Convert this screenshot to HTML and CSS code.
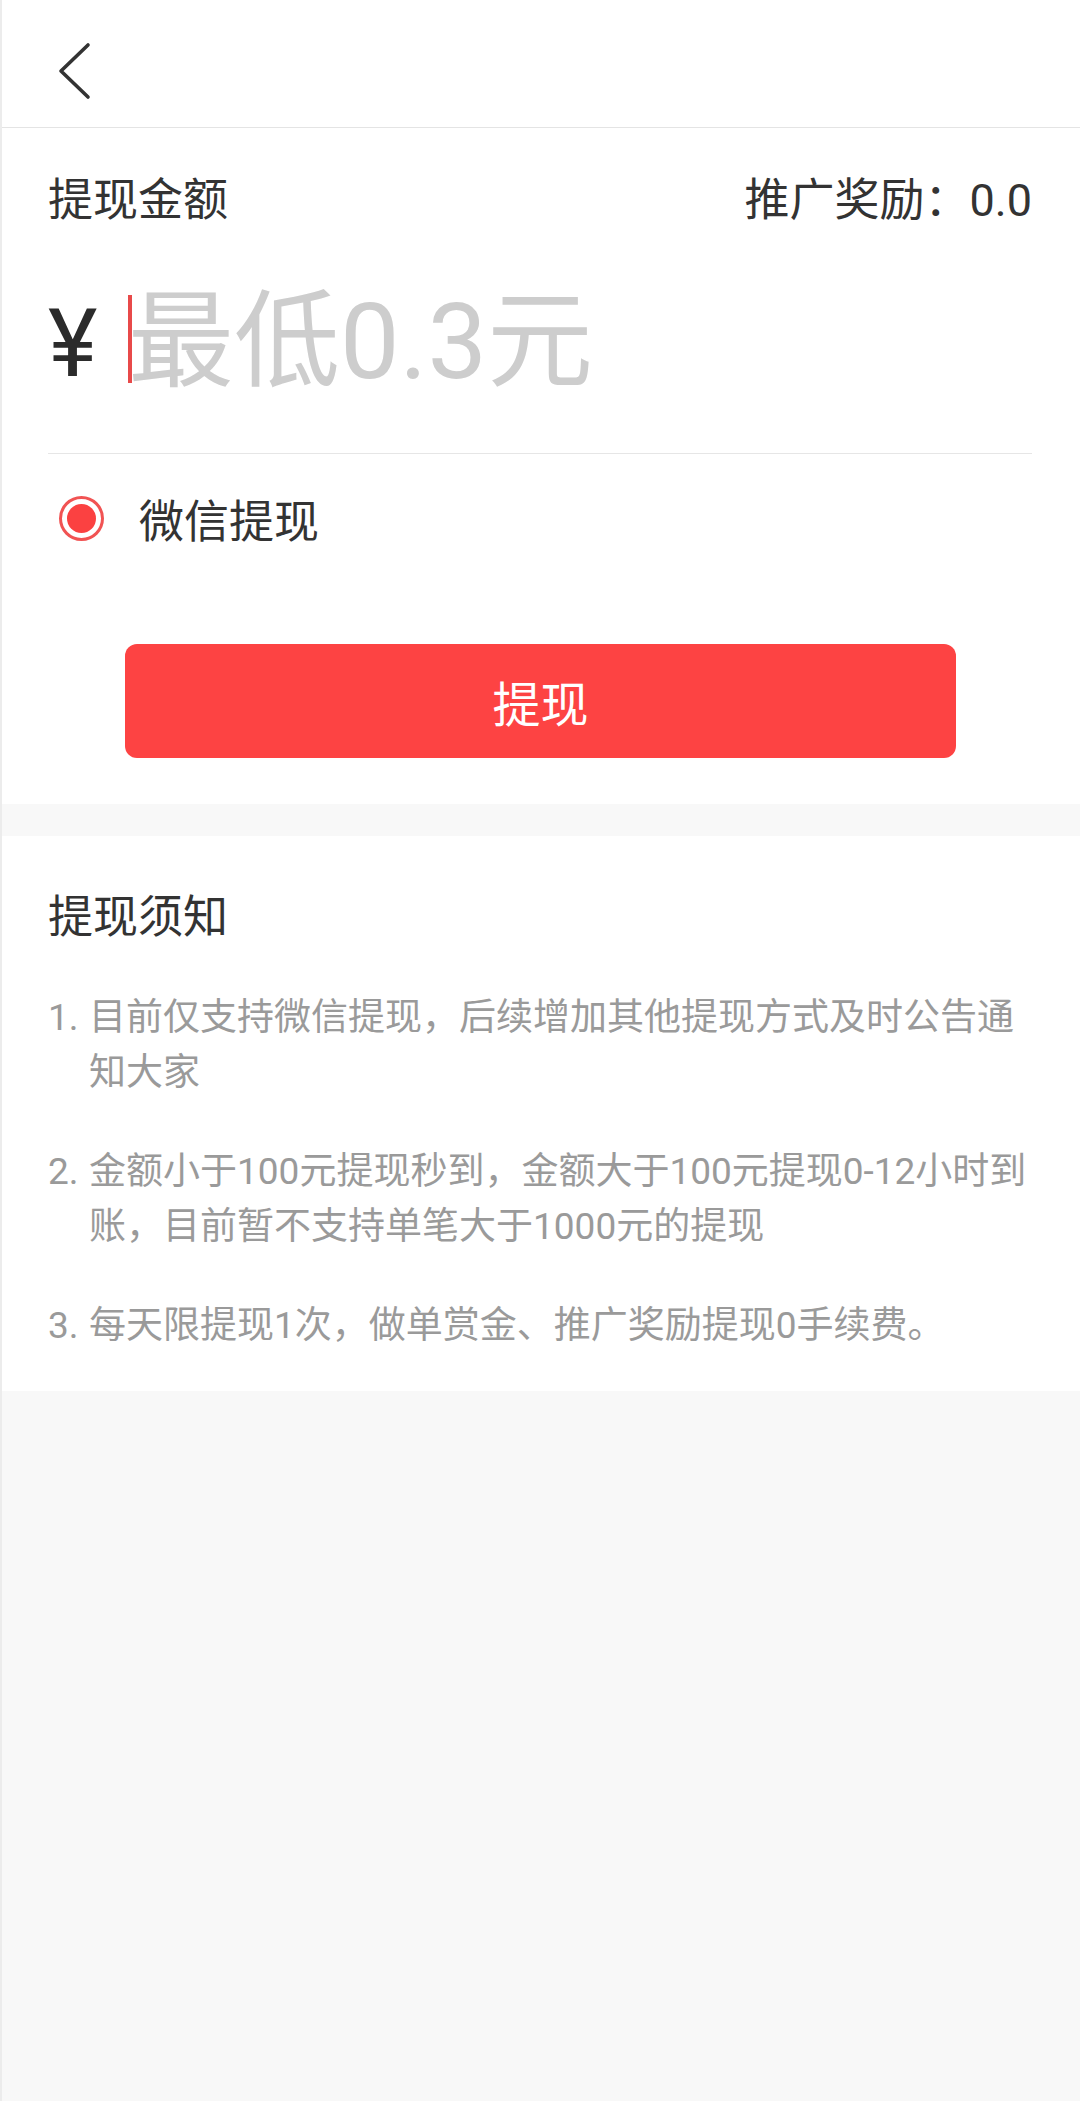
FILE: index.html
```html
<!DOCTYPE html>
<html lang="zh-CN">
<head>
<meta charset="utf-8">
<title>提现</title>
<link rel="stylesheet" href="styles.css">
</head>
<body>
<div class="page">
  <header class="topbar">
    <svg class="back" width="40" height="64" viewBox="0 0 40 64">
      <polyline points="35,7 8,33 35,59" fill="none" stroke="#333" stroke-width="3.6" stroke-linecap="round" stroke-linejoin="round"/>
    </svg>
  </header>

  <section class="card form">
    <div class="row-head">
      <span class="title">提现金额</span>
      <span class="reward">推广奖励：0.0</span>
    </div>
    <div class="amount">
      <span class="yen">¥</span>
      <span class="cursor"></span>
      <span class="placeholder">最低0.3元</span>
    </div>
    <div class="divider"></div>
    <div class="method">
      <span class="radio"><span class="dot"></span></span>
      <span class="method-label">微信提现</span>
    </div>
    <button class="submit">提现</button>
  </section>

  <div class="gap"></div>

  <section class="card notice">
    <div class="title">提现须知</div>
    <ol class="rules">
      <li><span class="num">1.</span><span class="txt">目前仅支持微信提现，后续增加其他提现方式及时公告通知大家</span></li>
      <li><span class="num">2.</span><span class="txt">金额小于100元提现秒到，金额大于100元提现0-12小时到账，目前暂不支持单笔大于1000元的提现</span></li>
      <li><span class="num">3.</span><span class="txt">每天限提现1次，做单赏金、推广奖励提现0手续费。</span></li>
    </ol>
  </section>
</div>
</body>
</html>
```

FILE: styles.css
```css
* { box-sizing: border-box; }
html, body { margin: 0; padding: 0; }
body {
  background: #f8f8f8;
  font-family: Roboto, "Noto Sans CJK SC", "Noto Sans", sans-serif;
  color: #333;
}
.page {
  width: 1080px;
  min-height: 2101px;
  background: #f8f8f8;
  border-left: 2px solid #ececec;
}
.topbar {
  height: 128px;
  background: #fff;
  border-bottom: 1px solid #e4e4e4;
  display: flex;
  align-items: flex-start;
  padding-left: 51px;
  padding-top: 38px;
}
.back { display: block; }

.card { background: #fff; }
.form { padding: 0 48px 46px 46px; }

.row-head {
  display: flex;
  justify-content: space-between;
  align-items: center;
  padding-top: 43px;
  height: 103px;
  line-height: 60px;
}
.title { font-size: 45px; color: #333; line-height: 60px; }
.reward { font-size: 45px; color: #333; }

.amount {
  height: 222px;
  display: flex;
  align-items: center;
  padding-top: 4px;
}
.yen {
  font-family: Roboto, sans-serif;
  font-size: 94px;
  font-weight: 400;
  line-height: 1;
  color: #2b2b2b;
  width: 80px;
}
.cursor {
  width: 4px;
  height: 88px;
  background: #e84a4a;
  margin-right: -4px;
  position: relative;
  top: -5px;
}
.placeholder {
  font-size: 106px;
  line-height: 1;
  color: #cdcdcd;
  position: relative;
  top: -2px;
}

.divider { height: 1px; background: #e6e6e6; }

.method {
  height: 128px;
  display: flex;
  align-items: center;
  padding-left: 11px;
}
.radio {
  width: 45px;
  height: 45px;
  border-radius: 50%;
  border: 3px solid #f15353;
  display: flex;
  align-items: center;
  justify-content: center;
  margin-right: 35px;
}
.dot {
  width: 29px;
  height: 29px;
  border-radius: 50%;
  background: #fb4141;
}
.method-label { font-size: 45px; color: #333; }

.submit {
  display: block;
  width: 831px;
  height: 114px;
  margin: 62px 0 0 77px;
  border: none;
  border-radius: 12px;
  background: #fd4343;
  color: #fff;
  font-family: Roboto, "Noto Sans CJK SC", sans-serif;
  font-size: 48px;
  padding: 0;
}

.gap { height: 32px; }

.notice { padding: 52px 48px 38px 46px; }
.notice .title { display: block; }
.rules {
  list-style: none;
  margin: 42px 0 0 0;
  padding: 0;
  display: flex;
  flex-direction: column;
  gap: 44px;
}
.rules li {
  display: flex;
  font-size: 37px;
  line-height: 55px;
  color: #9a9a9a;
}
.num { width: 41px; flex: none; }
.txt { flex: 1; }
```
